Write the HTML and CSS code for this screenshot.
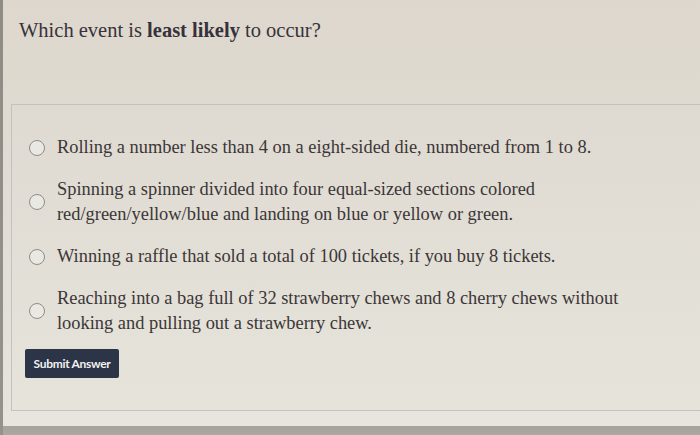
FILE: index.html
```html
<!DOCTYPE html>
<html>
<head>
<meta charset="utf-8">
<link rel="stylesheet" href="styles.css">
</head>
<body>
<div class="screen">
  <div class="edge"></div>
  <div class="page">
    <div class="question">Which event is <strong>least likely</strong> to occur?</div>
    <div class="panel">
      <div class="options">
        <label class="option">
          <span class="radio"></span>
          <span class="text">Rolling a number less than 4 on a eight-sided die, numbered from 1 to 8.</span>
        </label>
        <label class="option">
          <span class="radio"></span>
          <span class="text">Spinning a spinner divided into four equal-sized sections colored<br>red/green/yellow/blue and landing on blue or yellow or green.</span>
        </label>
        <label class="option">
          <span class="radio"></span>
          <span class="text">Winning a raffle that sold a total of 100 tickets, if you buy 8 tickets.</span>
        </label>
        <label class="option">
          <span class="radio"></span>
          <span class="text">Reaching into a bag full of 32 strawberry chews and 8 cherry chews without<br>looking and pulling out a strawberry chew.</span>
        </label>
      </div>
      <button class="submit">Submit Answer</button>
    </div>
    <div class="below"></div>
    <div class="bezel"></div>
  </div>
</div>
</body>
</html>
```
FILE: styles.css
```css
html, body {
  margin: 0;
  padding: 0;
  width: 700px;
  height: 435px;
  overflow: hidden;
}
body {
  background: #dfdad1;
}
.screen {
  display: flex;
  height: 435px;
}
.edge {
  width: 3px;
  background: linear-gradient(#8f8b85, #96928b);
  flex: none;
}
.page {
  flex: 1;
  display: flex;
  flex-direction: column;
  background: linear-gradient(180deg, #ddd7cd 0%, #e1ddd4 45%, #e6e4db 100%);
}
.question {
  height: 104px;
  box-sizing: border-box;
  padding: 17px 0 0 16px;
  font-family: "Liberation Serif", serif;
  font-size: 20.5px;
  line-height: 26px;
  color: #37323a;
}
.question strong {
  font-weight: bold;
}
.panel {
  margin-left: 8px;
  margin-right: -10px;
  border: 1px solid #c6c2b9;
  height: 307px;
  box-sizing: border-box;
  padding: 30px 0 0 13px;
  display: flex;
  flex-direction: column;
  align-items: flex-start;
}
.options {
  display: flex;
  flex-direction: column;
  gap: 17px;
  padding-left: 4px;
}
.option {
  display: flex;
  align-items: center;
  gap: 12px;
  font-family: "Liberation Serif", serif;
  font-size: 18.4px;
  line-height: 25px;
  color: #3b3637;
}
.radio {
  width: 14px;
  height: 14px;
  border: 1px solid #8e8c8a;
  border-radius: 50%;
  background: #eae8e2;
  flex: none;
}
.text {
  white-space: nowrap;
}
.submit {
  margin-top: 13px;
  width: 94px;
  height: 29px;
  border: none;
  border-radius: 2px;
  background: #2c3447;
  color: #f2f1f0;
  font-family: Lato, "Liberation Sans", sans-serif;
  font-weight: bold;
  font-size: 12px;
  letter-spacing: -0.3px;
  padding: 0;
}
.below {
  height: 15px;
  background: #e7e5dd;
}
.bezel {
  flex: 1;
  background: linear-gradient(#a5a39b, #a9a8a1);
}
```
